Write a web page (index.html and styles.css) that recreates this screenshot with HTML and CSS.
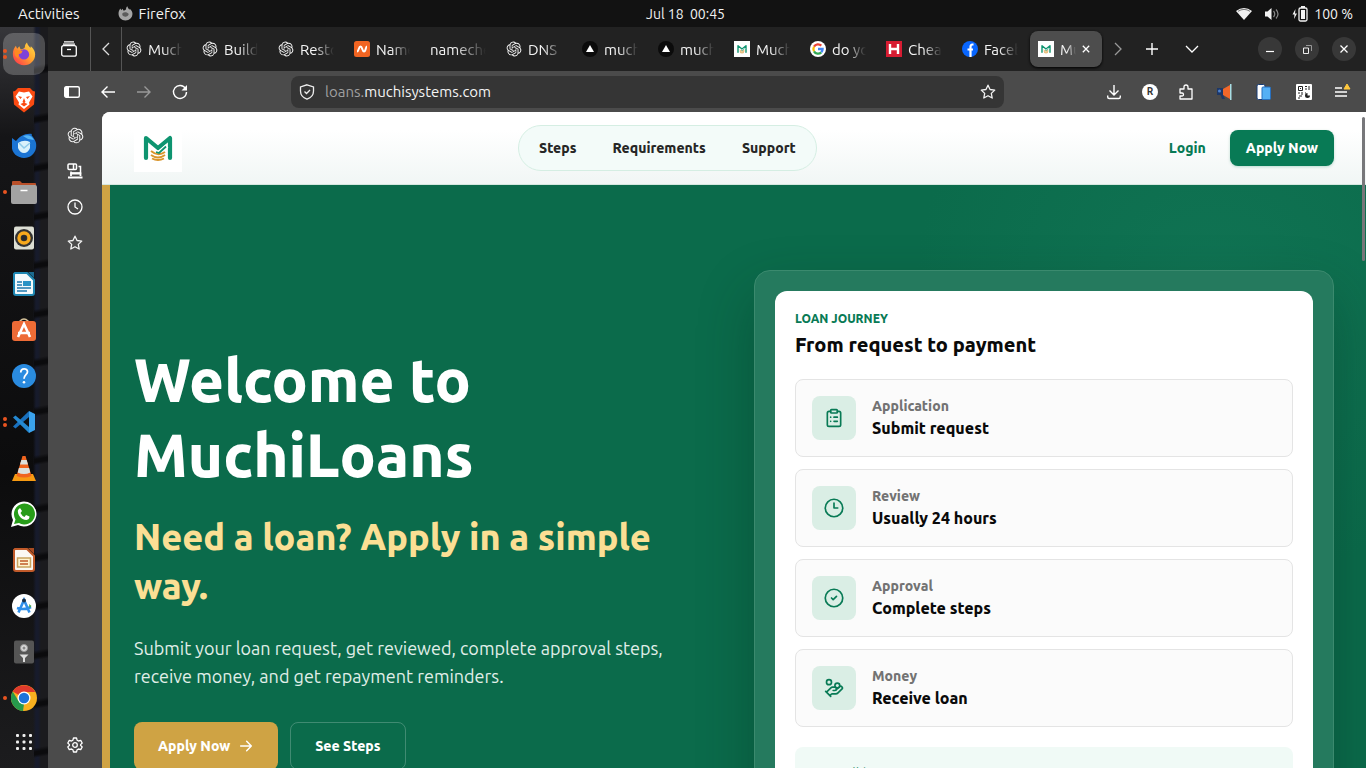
FILE: index.html
```html
<!DOCTYPE html>
<html lang="en">
<head>
<meta charset="utf-8">
<meta name="viewport" content="width=device-width, initial-scale=1">
<title>MuchiLoans</title>
<link rel="stylesheet" href="styles.css">
</head>
<body>
<svg class="sprite" aria-hidden="true">
  <symbol id="knot" viewBox="-1 -1 26 26"><path fill="currentColor" d="M22.2819 9.8211a5.9847 5.9847 0 0 0-.5157-4.9108 6.0462 6.0462 0 0 0-6.5098-2.9A6.0651 6.0651 0 0 0 4.9807 4.1818a5.9847 5.9847 0 0 0-3.9977 2.9 6.0462 6.0462 0 0 0 .7427 7.0966 5.98 5.98 0 0 0 .511 4.9107 6.051 6.051 0 0 0 6.5146 2.9001A5.9847 5.9847 0 0 0 13.2599 24a6.0557 6.0557 0 0 0 5.7718-4.2058 5.9894 5.9894 0 0 0 3.9977-2.9001 6.0557 6.0557 0 0 0-.7475-7.0729zm-9.022 12.6081a4.4755 4.4755 0 0 1-2.8764-1.0408l.1419-.0804 4.7783-2.7582a.7948.7948 0 0 0 .3927-.6813v-6.7369l2.02 1.1686a.071.071 0 0 1 .038.052v5.5826a4.504 4.504 0 0 1-4.4945 4.4944zm-9.6607-4.1254a4.4708 4.4708 0 0 1-.5346-3.0137l.142.0852 4.783 2.7582a.7712.7712 0 0 0 .7806 0l5.8428-3.3685v2.3324a.0804.0804 0 0 1-.0332.0615L9.74 19.9502a4.4992 4.4992 0 0 1-6.1408-1.6464zM2.3408 7.8956a4.485 4.485 0 0 1 2.3655-1.9728V11.6a.7664.7664 0 0 0 .3879.6765l5.8144 3.3543-2.0201 1.1685a.0757.0757 0 0 1-.071 0l-4.8303-2.7865A4.504 4.504 0 0 1 2.3408 7.872zm16.5963 3.8558L13.1038 8.364 15.1192 7.2a.0757.0757 0 0 1 .071 0l4.8303 2.7913a4.4944 4.4944 0 0 1-.6765 8.1042v-5.6772a.79.79 0 0 0-.407-.667zm2.0107-3.0231l-.142-.0852-4.7735-2.7818a.7759.7759 0 0 0-.7854 0L9.409 9.2297V6.8974a.0662.0662 0 0 1 .0284-.0615l4.8303-2.7866a4.4992 4.4992 0 0 1 6.6802 4.66zM8.3065 12.863l-2.02-1.1638a.0804.0804 0 0 1-.038-.0567V6.0742a4.4992 4.4992 0 0 1 7.3757-3.4537l-.142.0805L8.704 5.459a.7948.7948 0 0 0-.3927.6813zm1.0976-2.3654l2.602-1.4998 2.6069 1.4998v2.9994l-2.5974 1.4997-2.6067-1.4997Z"/></symbol>
  <symbol id="vercel" viewBox="0 0 16 16"><circle cx="8" cy="8" r="8" fill="#0b0b0b"/><path d="M8 4l4 7H4z" fill="#fff"/></symbol>
  <symbol id="muchi" viewBox="0 0 48 48">
    <path d="M12 34V14L24 24 36 14V34" fill="none" stroke="#0e9470" stroke-width="4.200" stroke-linejoin="round" stroke-linecap="round"/>
    <path d="M17 27l7 3.500L33 22" fill="none" stroke="#fff" stroke-width="4"/>
    <path d="M17 27q7 6 14 1M17 31q7 5 14 0M18 34.500q6 3 12 0" fill="none" stroke="#d9952c" stroke-width="1.900"/>
    <path d="M22 28l3 1L32 22.500" fill="none" stroke="#0e9470" stroke-width="1.800"/></symbol>
  <symbol id="star" viewBox="0 0 16 16"><path d="M8 1.200l2.050 4.300 4.700.6-3.450 3.250.9 4.650L8 11.700 3.800 14l.9-4.650L1.250 6.100l4.700-.6z" fill="none" stroke="currentColor" stroke-width="1.300" stroke-linejoin="round"/></symbol>
  <symbol id="flame" viewBox="0 0 28 28"><path d="M14 27C6.500 27 1 21.500 1 14 1 10 2.500 7 4.500 4.500L6 8l2.500-3 1.500 3.500c2 0 4-1 5-2.500 0-2.500 1-4 2.500-5.500.5 3 2.500 4.500 4 6.500l.5-2c3.500 3 5 6 5 9.500C27 21.500 21.500 27 14 27z"/></symbol>
</svg>
<div class="desktop">
  <header class="topbar">
    <div class="topbar-left">
      <button class="top-btn">Activities</button>
      <button class="top-btn app-name"><svg width="15" height="15" viewBox="0 0 28 28"><use href="#flame" fill="#a5a5a5"/><path d="M8 14c3-3 9-3 12 1-1 6-9 7-12 2z" fill="#5c5c5c"/></svg>Firefox</button>
    </div>
    <time class="clock">Jul 18&nbsp; 00:45</time>
    <div class="tray">
      <svg width="16" height="14" viewBox="0 0 16 14"><path d="M0 4Q8-2 16 4L8 13z" fill="#f2f2f2"/><path d="M2 4.300Q8 .5 14 4.300" fill="none" stroke="#777" stroke-width="1"/></svg>
      <svg class="tray-volume" width="16" height="14" viewBox="0 0 16 14"><path d="M1 4.500h2.500L7.500 1v12L3.500 9.500H1z" fill="#f2f2f2"/><path d="M9.500 4q2.500 3 0 6M12 2.500q4 4.500 0 9" fill="none" stroke="#888" stroke-width="1.200"/></svg>
      <svg width="16" height="16" viewBox="0 0 16 16"><path d="M3.500 3L.5 8.500h2L2 13l3-5.500H3z" fill="#f2f2f2"/><rect x="7" y="2" width="8" height="13" rx="1.500" fill="none" stroke="#f2f2f2" stroke-width="1.300"/><path d="M9 0h4v2H9zM9 4h4v9H9z" fill="#f2f2f2"/></svg>
      <span>100 %</span>
    </div>
  </header>

  <div class="workspace">
    <nav class="dock" aria-label="Dock">
      <button class="dock-item is-active two" aria-label="Firefox"><svg width="24" height="24" viewBox="0 0 28 28"><defs><linearGradient id="ff" x1="1" y1="0" x2="0" y2="1"><stop offset="0" stop-color="#ffe34d"/><stop offset=".45" stop-color="#ffa52e"/><stop offset="1" stop-color="#ff2850"/></linearGradient></defs><use href="#flame" fill="url(#ff)"/><circle cx="14" cy="14.500" r="6" fill="#7d42d8"/><path d="M3 8q4 3 9.500 2L11 13l-4 1.500q-1 3 1.500 5Q3 18 3 12z" fill="#ff8a20"/></svg></button>
      <button class="dock-item" aria-label="Brave"><svg width="24" height="26" viewBox="0 0 24 26"><path d="M6 1h12l3 3 2 .5-1 13-10 8-10-8-1-13L3 4z" fill="#fb4a12"/><path d="M7 4.500l5 1 5-1 3.500 5-3.500 6 .5 2L12 22l-5.500-4.500.5-2-3.500-6z" fill="#fff"/><path d="M6 9l4 1-1.500 2zM18 9l-4 1 1.500 2zM12 11l1.500 4-1.500 1-1.500-1zM8.500 17l3.500-1.500 3.500 1.500L12 19.500z" fill="#fb4a12"/></svg></button>
      <button class="dock-item" aria-label="Thunderbird"><svg width="26" height="26" viewBox="0 0 26 26"><path d="M1 5l4 3C9 3 14 0 21 1c-1 1 0 2 1 3 2 3 4 6 3 11-1 6-6 10-12 10S0 20 1 13z" fill="#1b74d4"/><path d="M12 3c5-2 9 0 11 4l-6-1z" fill="#55b5f5"/><path d="M7 10q6-4 12-1v6q-2 5-6 5t-6-5z" fill="#d9f1fb"/><path d="M8 10l5 5 6-5" fill="none" stroke="#8fcbea" stroke-width="1.500"/></svg></button>
      <button class="dock-item one" aria-label="Files"><svg width="26" height="24" viewBox="0 0 26 24"><path d="M1 2q0-1 1-1h7l2 2h13q1 0 1 1v8H1z" fill="#b9502a"/><rect y="5" width="26" height="19" rx="2" fill="#a3a3a3"/><path d="M9.500 10.500h7" stroke="#fff" stroke-width="1.500"/></svg></button>
      <button class="dock-item" aria-label="Rhythmbox"><svg width="22" height="24" viewBox="0 0 22 24"><rect x="1" y=".5" width="20" height="23" rx="2" fill="#dcded4"/><circle cx="11" cy="12" r="9" fill="#333"/><circle cx="11" cy="12" r="5" fill="none" stroke="#f8a91c" stroke-width="3.400"/><circle cx="11" cy="12" r="2.400" fill="#292929"/></svg></button>
      <button class="dock-item" aria-label="Writer"><svg width="22" height="24" viewBox="0 0 22 24"><path d="M2 1h12l7 7v13q0 2-2 2H3q-2 0-2-2V2z" fill="#f4fafd" stroke="#1f87b3" stroke-width="2"/><path d="M15 0h6v6z" fill="#1b6a91"/><path d="M4 10h5M4 13h5M4 16h14M4 19h10" stroke="#1f79ad" stroke-width="1.500"/><rect x="10" y="9" width="8" height="5" fill="#2993c6"/></svg></button>
      <button class="dock-item" aria-label="Software"><svg width="24" height="24" viewBox="0 0 24 24"><path d="M8 5V3q4-4 8 0v2" fill="none" stroke="#d4c199" stroke-width="1.500"/><rect y="3" width="24" height="20" rx="3" fill="#ee6b36"/><path d="M6 19l6-13 6 13M6 15h12" fill="none" stroke="#fff" stroke-width="2.600"/></svg></button>
      <button class="dock-item" aria-label="Help"><svg width="24" height="24" viewBox="0 0 24 24"><circle cx="12" cy="12" r="12" fill="#2a8be0"/><path d="M8.800 8.500c0-5 6.700-4.500 6.700-.8 0 3-3.500 3-3.500 7" fill="none" stroke="#fff" stroke-width="1.800"/><circle cx="12" cy="18.300" r="1.300" fill="#fff"/></svg></button>
      <button class="dock-item two" aria-label="Visual Studio Code"><svg width="24" height="24" viewBox="0 0 24 24"><path d="M17 1v6L3.500 18.500 1 16.500z" fill="#1970bd"/><path d="M17 23v-6L3.500 5.500 1 7.500z" fill="#2489d2"/><path d="M17 1l6 3v16l-6 3z" fill="#3aa2ef"/></svg></button>
      <button class="dock-item" aria-label="VLC"><svg width="24" height="26" viewBox="0 0 24 26"><path d="M3 19h18l3 7H0z" fill="#f79a12"/><path d="M10.500 1h3l6 20q-7.500 3-15 0z" fill="#f0641e"/><path d="M9.300 5h5.400l1.300 4.500H8zM6.900 13h10.200l1.200 4.500q-6.300 3-12.600 0z" fill="#dce0dc"/></svg></button>
      <button class="dock-item" aria-label="WhatsApp"><svg width="26" height="26" viewBox="0 0 26 26"><path d="M0 26l2-7A12.500 12.500 0 1 1 7 24z" fill="#fff"/><path d="M3 23l1.500-4.500A10.500 10.500 0 1 1 8 22z" fill="#279c19"/><path d="M9 7l2 3-1.500 2q1.500 3 4 4l1.500-2 3.500 1.500q0 3-3 3.500C10 19 6 13 7 9z" fill="#fff"/></svg></button>
      <button class="dock-item" aria-label="Impress"><svg width="22" height="24" viewBox="0 0 22 24"><path d="M2 1h12l7 7v13q0 2-2 2H3q-2 0-2-2V2z" fill="#fbf8f4" stroke="#c05a2a" stroke-width="2"/><path d="M15 0h6v6z" fill="#a84b22"/><rect x="4.500" y="10" width="13" height="9" fill="#fff4d0" stroke="#c9a35f" stroke-width="1.500"/><path d="M7 13h8M7 16h8" stroke="#c05a2a" stroke-width="1.600"/></svg></button>
      <button class="dock-item" aria-label="Android Studio"><svg width="24" height="24" viewBox="0 0 24 24"><circle cx="12" cy="12" r="12" fill="#fff"/><path d="M6.500 18.500L12 6l5.500 12.500M5 14q7 2.500 14-1" fill="none" stroke="#2f8fe9" stroke-width="2.600"/><circle cx="12" cy="6.500" r="2" fill="#1b3147"/><path d="M17 10l2.500 2-2 2z" fill="#49a849"/></svg></button>
      <button class="dock-item" aria-label="Disk utility"><svg width="20" height="24" viewBox="0 0 20 24"><rect y=".5" width="20" height="23" rx="2" fill="#555"/><circle cx="10" cy="8" r="3.500" fill="#ddd" stroke="#999"/><circle cx="10" cy="8" r="1.500" fill="#888"/><path d="M5.500 14.500h9L11 18v4H9v-4z" fill="#ddd"/></svg></button>
      <button class="dock-item one" aria-label="Chrome"><svg width="26" height="26" viewBox="0 0 26 26"><circle cx="13" cy="13" r="13" fill="#f8b01f"/><path d="M13 13L1.700 6.500A13 13 0 0 1 24.300 7H13z" fill="#df3a2c"/><path d="M1.700 6.500L7.500 16l5.500 3-1 7A13 13 0 0 1 1.700 6.500z" fill="#279a4c"/><circle cx="13" cy="13" r="6.500" fill="#fff"/><circle cx="13" cy="13" r="5.200" fill="#1c73d9"/></svg></button>
      <button class="dock-item" aria-label="Show applications"><svg width="18" height="18" viewBox="0 0 18 18" fill="#eee"><g id="dots"><rect x="1" y="1" width="3" height="3" rx="1"/><rect x="7.500" y="1" width="3" height="3" rx="1"/><rect x="14" y="1" width="3" height="3" rx="1"/></g><use href="#dots" y="6.500"/><use href="#dots" y="13"/></svg></button>
    </nav>

    <main class="browser">
      <div class="tabbar">
        <button class="tab-tool archive" aria-label="Recent tabs"><svg width="16" height="16" viewBox="0 0 16 16" fill="none" stroke="#fff" stroke-width="1.300"><path d="M3 .8h10M2 3.200h12"/><rect x=".7" y="4.700" width="14.600" height="10.500" rx="2"/><path d="M6 8.500h4"/></svg></button>
        <button class="tab-tool prev" aria-label="Scroll left"><svg width="8" height="14" viewBox="0 0 8 14"><path d="M7 1L1 7l6 6" fill="none" stroke="#ddd" stroke-width="1.300"/></svg></button>
        <div class="tabs">
          <button class="tab"><svg class="fav"><use href="#knot"/></svg><span>Much</span></button>
          <button class="tab"><svg class="fav"><use href="#knot"/></svg><span>Build</span></button>
          <button class="tab"><svg class="fav"><use href="#knot"/></svg><span>Resto</span></button>
          <button class="tab"><svg class="fav" viewBox="0 0 16 16"><rect width="16" height="16" rx="2.500" fill="#f26522"/><path d="M3 10.500c2 0 1.500-5 3.500-5s1.500 5 3.500 5 1.500-5 3-5" fill="none" stroke="#fff" stroke-width="2"/></svg><span>Name</span></button>
          <button class="tab"><span>nameche</span></button>
          <button class="tab"><svg class="fav"><use href="#knot"/></svg><span>DNS</span></button>
          <button class="tab"><svg class="fav"><use href="#vercel"/></svg><span>much</span></button>
          <button class="tab"><svg class="fav"><use href="#vercel"/></svg><span>much</span></button>
          <button class="tab"><svg class="fav white"><use href="#muchi"/></svg><span>Much</span></button>
          <button class="tab"><svg class="fav" viewBox="0 0 16 16"><circle cx="8" cy="8" r="8" fill="#fff"/><g fill="none" stroke-width="2.300"><path d="M11.300 4.700A4.700 4.700 0 0 0 4 5.700" stroke="#ea4335"/><path d="M4 5.700a4.700 4.700 0 0 0 0 4.600" stroke="#fbbc05"/><path d="M4 10.300a4.700 4.700 0 0 0 7.300 1" stroke="#34a853"/><path d="M11.300 11.300A4.500 4.500 0 0 0 12.600 8H8" stroke="#4285f4"/></g></svg><span>do yo</span></button>
          <button class="tab"><svg class="fav" viewBox="0 0 16 16"><path d="M0 0h16v16H0z" fill="#d71c32"/><path d="M4 3v10M12 3v10M4 8h8" stroke="#fff" stroke-width="2.400"/></svg><span>Chea</span></button>
          <button class="tab"><svg class="fav" viewBox="0 0 16 16"><circle cx="8" cy="8" r="8" fill="#0866ff"/><path d="M11.500 3.500H10.500Q8.500 3.500 8.500 6v10M5.500 8.500h5.500" fill="none" stroke="#fff" stroke-width="2.200"/></svg><span>Faceb</span></button>
          <button class="tab selected"><svg class="fav white"><use href="#muchi"/></svg><span>Mu</span><svg width="8" height="8" viewBox="0 0 10 10"><path d="M1 1l8 8M9 1L1 9" stroke="#fff" stroke-width="1.600"/></svg></button>
        </div>
        <button class="tab-tool next" aria-label="Scroll right"><svg width="8" height="14" viewBox="0 0 8 14"><path d="M1 1l6 6-6 6" fill="none" stroke="#999" stroke-width="1.300"/></svg></button>
        <button class="tab-tool wide" aria-label="New tab"><svg width="12" height="12" viewBox="0 0 12 12"><path d="M6 0v12M0 6h12" stroke="#fff" stroke-width="1.400"/></svg></button>
        <button class="tab-tool wide" aria-label="List all tabs"><svg width="14" height="8" viewBox="0 0 14 8"><path d="M1 1l6 6 6-6" fill="none" stroke="#fff" stroke-width="1.300"/></svg></button>
        <div class="window-controls">
          <button aria-label="Minimize"><svg width="8" height="8" viewBox="0 0 8 8"><path d="M0 6.500h8" stroke="#fff" stroke-width="1.200"/></svg></button>
          <button aria-label="Restore"><svg width="9" height="9" viewBox="0 0 9 9" fill="none" stroke="#eee"><path d="M.5 3h5v5.500h-5z"/><path d="M3 .5h5.500V6" stroke="#999"/></svg></button>
          <button aria-label="Close"><svg width="8" height="8" viewBox="0 0 8 8"><path d="M.5.5l7 7M7.500.5l-7 7" stroke="#fff" stroke-width="1.300"/></svg></button>
        </div>
      </div>

      <div class="toolbar">
        <button class="tool" aria-label="Sidebar"><svg width="16" height="12" viewBox="0 0 16 12"><rect x=".7" y=".7" width="14.600" height="10.600" rx="1.500" fill="none" stroke="#fff" stroke-width="1.400"/><path d="M1 1h4v10H1z" fill="#fff"/></svg></button>
        <button class="tool" aria-label="Back"><svg width="16" height="14" viewBox="0 0 16 14"><path d="M15 7H2M7.500 1.500L2 7l5.500 5.500" fill="none" stroke="#fff" stroke-width="1.400"/></svg></button>
        <button class="tool" aria-label="Forward"><svg width="16" height="14" viewBox="0 0 16 14"><path d="M1 7h13M8.500 1.500L14 7l-5.500 5.500" fill="none" stroke="#999" stroke-width="1.400"/></svg></button>
        <button class="tool" aria-label="Reload"><svg width="16" height="16" viewBox="0 0 16 16"><path d="M13.500 4.500A6.500 6.500 0 1 0 14.500 8" fill="none" stroke="#fff" stroke-width="1.400"/><path d="M15 1v5.500H9.500z" fill="#fff"/></svg></button>
        <div class="urlbar">
          <svg width="16" height="16" viewBox="0 0 16 16" fill="none" stroke="#eee" stroke-width="1.300"><path d="M8 .8L14.500 3v4c0 4-3 7-6.500 8.200C4.500 14 1.500 11 1.500 7V3z"/><path d="M5.500 7.500l2 2 3.500-3.500"/></svg>
          <a class="url" href="#top"><span>loans.</span>muchisystems.com</a>
          <svg width="16" height="16"><use href="#star"/></svg>
        </div>
        <button class="tool" aria-label="Downloads"><svg width="14" height="16" viewBox="0 0 14 16" fill="none" stroke="#fff" stroke-width="1.400"><path d="M7 1v9.500M2.500 6.500L7 11l4.500-4.500M.7 11.500v1.500q0 1.500 1.500 1.500h9.600q1.500 0 1.500-1.500v-1.500"/></svg></button>
        <button class="tool" aria-label="R extension"><span class="r-badge">R</span></button>
        <button class="tool" aria-label="Extensions"><svg width="16" height="16" viewBox="0 0 16 16"><path d="M2 5h4V3q0-2 2-2t2 2v2h4v10H2v-3h2q1.500 0 1.500-1.500T4 9H2z" fill="none" stroke="#fff" stroke-width="1.300" stroke-linejoin="round"/></svg></button>
        <button class="tool wide" aria-label="Megaphone"><svg width="16" height="16" viewBox="0 0 16 16"><path d="M7 5l7-4v14l-7-4z" fill="#f2672a"/><path d="M14 0h1.500v16H14z" fill="#a8dde4"/><path d="M1 4h6v7l2 4H6l-1.500-4H1z" fill="#1d3767"/><circle cx="3.500" cy="7" r="1.500" fill="#4d83d0"/></svg></button>
        <button class="tool wide" aria-label="Device"><svg width="16" height="16" viewBox="0 0 16 16"><rect x="1" y=".5" width="8" height="15" rx="1.500" fill="#fff" stroke="#173c78"/><rect x="6" y="3" width="8.500" height="12.500" rx="1" fill="#55b0f5" stroke="#2870bf"/></svg></button>
        <button class="tool wide" aria-label="QR code"><svg width="16" height="16" viewBox="0 0 16 16"><rect width="16" height="16" rx="1" fill="#fff"/><path d="M2.500 2.500h4v4h-4zM9 2.500h2M13 2v4M9 5h2M2 9h2M6 8v3M3 12h3M2 14h2M9 9h1" fill="none" stroke="#222"/><path d="M4 4h1v1H4z" fill="#222"/><path d="M11.500 9v2.500H14a2.500 2.500 0 1 1-2.500-2.500z" fill="#222"/></svg></button>
        <button class="tool" aria-label="Menu"><svg width="18" height="18" viewBox="0 0 18 18"><path d="M2 5h7M2 9h12M2 13h12" stroke="#fff" stroke-width="1.400"/><path d="M14 1l3 5h-6z" fill="#ffc83d" stroke="#ffc83d" stroke-linejoin="round"/></svg></button>
      </div>

      <div class="content">
        <aside class="sidebar">
          <button class="side-btn" aria-label="Assistant"><svg width="17" height="17"><use href="#knot"/></svg></button>
          <button class="side-btn" aria-label="Synced tabs"><svg width="16" height="16" viewBox="0 0 16 16" fill="none" stroke="#fff" stroke-width="1.500"><rect x="1" y="1" width="8.500" height="5.500" rx="1"/><path d="M6.500 1v5.500M11.500 3.500h2V10H4V8.500" /><path d="M4 13v-2.500h9.500V13M1 14.500h14.500" stroke-width="1.800"/></svg></button>
          <button class="side-btn" aria-label="History"><svg width="16" height="16" viewBox="0 0 16 16" fill="none" stroke="#fff" stroke-width="1.300"><circle cx="8" cy="8" r="7"/><path d="M8 3.500V8l3 2"/></svg></button>
          <button class="side-btn" aria-label="Bookmarks"><svg width="16" height="16"><use href="#star"/></svg></button>
          <button class="side-btn last" aria-label="Settings"><svg width="16" height="16" viewBox="0 0 16 16" fill="none" stroke="#fff" stroke-width="1.300" stroke-linejoin="round"><path d="M6.500 1h3l.6 2.200 1.400.8 2.200-.6 1.500 2.600L13.600 7.600v.8l1.600 1.600-1.500 2.600-2.200-.6-1.400.8-.6 2.200h-3l-.6-2.200-1.400-.8-2.200.6L.8 10l1.600-1.600v-.8L.8 6l1.500-2.600 2.200.6 1.400-.8z"/><circle cx="8" cy="8" r="2.300"/></svg></button>
        </aside>

        <div class="page" id="top">
          <div class="scroll-thumb"></div>
          <header class="site-header">
            <a class="logo" href="#top" aria-label="MuchiLoans home"><svg width="48" height="48"><use href="#muchi"/></svg></a>
            <nav class="pill-nav"><a href="#steps">Steps</a><a href="#requirements">Requirements</a><a href="#support">Support</a></nav>
            <div class="account"><a class="login" href="#login">Login</a><a class="apply" href="#apply">Apply Now</a></div>
          </header>
          <section class="hero">
            <div class="intro">
              <h1>Welcome to MuchiLoans</h1>
              <h2>Need a loan? Apply in a simple way.</h2>
              <p>Submit your loan request, get reviewed, complete approval steps, receive money, and get repayment reminders.</p>
              <div class="actions">
                <a class="btn gold" href="#apply">Apply Now<svg width="16" height="16" viewBox="0 0 24 24" fill="none" stroke="currentColor" stroke-width="2.200" stroke-linecap="round" stroke-linejoin="round"><path d="M4 12h16M13 5l7 7-7 7"/></svg></a>
                <a class="btn outline" href="#steps">See Steps</a>
              </div>
            </div>
            <div class="journey-frame">
              <div class="journey" id="steps">
                <p class="eyebrow">LOAN JOURNEY</p>
                <h3>From request to payment</h3>
                <ol class="steps">
                  <li><span class="step-icon"><svg viewBox="0 0 24 24"><rect x="8" y="2" width="8" height="4" rx="1"/><path d="M16 4h2a2 2 0 0 1 2 2v14a2 2 0 0 1-2 2H6a2 2 0 0 1-2-2V6a2 2 0 0 1 2-2h2M12 11h4M12 16h4M8 11h.01M8 16h.01"/></svg></span><div><span>Application</span><strong>Submit request</strong></div></li>
                  <li><span class="step-icon"><svg viewBox="0 0 24 24"><circle cx="12" cy="12" r="10.500"/><path d="M12 6v6h4.500"/></svg></span><div><span>Review</span><strong>Usually 24 hours</strong></div></li>
                  <li><span class="step-icon"><svg viewBox="0 0 24 24"><circle cx="12" cy="12" r="10.500"/><path d="M9 12l2 2 4-4"/></svg></span><div><span>Approval</span><strong>Complete steps</strong></div></li>
                  <li><span class="step-icon"><svg viewBox="0 0 24 24"><path d="M11 15h2a2 2 0 1 0 0-4h-3c-.6 0-1.100.2-1.400.6L3 17M7 21l1.600-1.400c.3-.4.8-.6 1.400-.6h4c1.100 0 2.100-.4 2.800-1.200l4.600-4.400a2 2 0 0 0-2.750-2.910l-4.200 3.900M2 16l6 6"/><circle cx="16" cy="9" r="2.900"/><circle cx="6" cy="5" r="3"/></svg></span><div><span>Money</span><strong>Receive loan</strong></div></li>
                </ol>
                <p class="note">You will be sent a message at every stage</p>
              </div>
            </div>
          </section>
        </div>
      </div>
    </main>
  </div>
</div>
</body>
</html>
```
FILE: styles.css
```css
* { box-sizing: border-box; }

body {
  margin: 0;
  font-family: Ubuntu, "Noto Sans", sans-serif;
  color: #0a0a0a;
  background: #111;
}

button {
  font: inherit;
  color: inherit;
  border: 0;
  padding: 0;
  background: none;
}

a { color: inherit; text-decoration: none; }
h1, h2, h3, p, ol { margin: 0; padding: 0; }
svg { display: block; flex: none; }
.sprite { position: absolute; width: 0; height: 0; }

.desktop {
  display: flex;
  flex-direction: column;
  height: 100vh;
  overflow: hidden;
}

/* System bar */
.topbar {
  display: grid;
  grid-template-columns: 1fr auto 1fr;
  align-items: center;
  flex: none;
  height: 27px;
  padding: 0 13px 0 18px;
  background: #121212;
  color: #f2f2f2;
  font-size: 15px;
}
.topbar-left, .app-name { display: flex; align-items: center; }
.topbar-left { gap: 38px; }
.app-name { gap: 6px; }
.clock { font-size: 14px; }
.tray { display: flex; align-items: center; justify-content: flex-end; gap: 6px; font-size: 14px; }
.tray-volume { margin: 0 6px; }

.workspace { display: flex; flex: 1; min-height: 0; }

/* Dock */
.dock {
  display: flex;
  flex-direction: column;
  flex: none;
  width: 48px;
  padding-top: 4px;
  background:
    repeating-linear-gradient(170deg, transparent 0 38px, #0b0b0d 42px 45px, transparent 48px) 34px 0 / 14px 100% no-repeat,
    linear-gradient(90deg, transparent 33px, #171b2c 36px 38px, #1b1b1e 41px),
    linear-gradient(#36363a, #151517 110px, #0c0c0d 60%, #1c1c1e);
}
.dock-item {
  position: relative;
  display: grid;
  place-items: center;
  flex: none;
  width: 48px;
  height: 46px;
}
.dock-item:last-child { height: 42px; }
.is-active::before {
  content: "";
  position: absolute;
  inset: 2px 3px;
  border-radius: 10px;
  background: #ffffff38;
}
.dock-item svg { position: relative; }
.one::after, .two::after {
  content: "";
  position: absolute;
  left: 3px;
  top: 21px;
  width: 4px;
  height: 4px;
  border-radius: 50%;
  background: #e95420;
}
.two::after { top: 18px; box-shadow: 0 6px #e95420; }

/* Browser chrome */
.browser {
  display: flex;
  flex-direction: column;
  flex: 1;
  min-width: 0;
  background: #4b4b4b;
  color: #f4f4f4;
}
.tabbar {
  display: flex;
  align-items: center;
  flex: none;
  height: 44px;
  padding-right: 10px;
  background: #222;
}
.tab-tool { display: grid; place-items: center; flex: none; height: 44px; }
.archive { width: 43px; border-right: 1px solid #555; }
.prev { width: 31px; border-right: 1px solid #555; }
.next { width: 28px; }
.tab-tool.wide { width: 40px; }
.tabs {
  display: flex;
  justify-content: flex-end;
  flex: 1;
  min-width: 0;
  overflow: hidden;
}
.tab {
  display: flex;
  align-items: center;
  gap: 6px;
  flex: none;
  width: 72px;
  height: 36px;
  margin: 4px 2px;
  padding: 0 8px;
  border-radius: 8px;
  font-size: 15px;
}
.tab span {
  flex: 1;
  min-width: 0;
  overflow: hidden;
  white-space: nowrap;
  text-align: left;
  mask-image: linear-gradient(90deg, #000 45%, transparent);
}
.tab.selected { padding-right: 12px; background: #4d4d4d; box-shadow: 0 1px 3px #000; }
.fav { width: 16px; height: 16px; }
.fav.white { background: #fff; }
.window-controls { display: flex; gap: 13px; margin-left: 46px; }
.window-controls button {
  display: grid;
  place-items: center;
  width: 24px;
  height: 24px;
  border-radius: 50%;
  background: #383838;
}

.toolbar {
  display: flex;
  align-items: center;
  flex: none;
  height: 41px;
  padding: 0 6px;
}
.tool { display: grid; place-items: center; flex: none; width: 36px; height: 32px; }
.tool.wide { width: 40px; }
.urlbar {
  display: flex;
  align-items: center;
  gap: 10px;
  flex: 1;
  height: 32px;
  margin: 0 92px 0 93px;
  padding: 0 8px;
  border-radius: 8px;
  background: #353535;
  font-size: 15px;
}
.url { flex: 1; }
.url span { color: #a0a0a0; }
.r-badge {
  display: grid;
  place-items: center;
  width: 16px;
  height: 16px;
  border-radius: 50%;
  background: #fff;
  color: #333;
  font-size: 10px;
  font-weight: 700;
}

.content { display: flex; flex: 1; min-height: 0; }
.sidebar {
  display: flex;
  flex-direction: column;
  flex: none;
  width: 54px;
  padding: 5px 0;
}
.side-btn { display: grid; place-items: center; height: 36px; }
.side-btn.last { margin-top: auto; }

/* Website */
.page {
  position: relative;
  flex: 1;
  min-width: 0;
  overflow: hidden;
  border-top-left-radius: 8px;
  background: #fff;
}
.scroll-thumb {
  position: absolute;
  z-index: 2;
  top: 5px;
  right: 1px;
  width: 3px;
  height: 144px;
  border-radius: 2px;
  background: #77777a;
}
.site-header {
  display: flex;
  align-items: center;
  justify-content: space-between;
  height: 73px;
  padding: 0 32px;
  border-bottom: 1px solid #d5e7df;
  background: linear-gradient(#fff 25%, #f1f6f5);
  font-size: 14px;
  font-weight: 800;
}
.logo { background: #fff; }
.pill-nav {
  display: flex;
  gap: 4px;
  padding: 4px;
  border: 1px solid #d5eee3;
  border-radius: 24px;
  background: #f3fbf9;
  color: #262626;
}
.pill-nav a { padding: 8px 16px; line-height: 20px; }
.account { display: flex; align-items: center; gap: 8px; }
.login { padding: 8px 16px; color: #087a55; }
.apply {
  padding: 8px 16px;
  border-radius: 8px;
  background: #087a55;
  color: #fff;
  line-height: 20px;
  box-shadow: 0 1px 3px #087a5540;
}

.hero {
  display: grid;
  grid-template-columns: 1fr 1fr;
  align-items: center;
  gap: 40px;
  padding: 85px 32px 85px 24px;
  border-left: 8px solid #cfa344;
  background: radial-gradient(circle at 88% 14%, #107353, #0b6b4b 300px);
  color: #fff;
}
.intro h1 { font-size: 60px; line-height: 75px; font-weight: 800; }
.intro h2 {
  margin-top: 20px;
  color: #fbdf94;
  font-size: 36px;
  line-height: 49px;
  font-weight: 800;
}
.intro p { margin-top: 24px; color: #e1efe9; font-size: 18px; line-height: 28px; }
.actions { display: flex; gap: 12px; margin-top: 32px; }
.btn {
  display: flex;
  align-items: center;
  gap: 8px;
  height: 48px;
  padding: 0 24px;
  border-radius: 8px;
  font-size: 14px;
  font-weight: 800;
}
.gold { background: #cfa344; }
.outline { border: 1px solid #ffffff38; }

.journey-frame {
  padding: 20px;
  border: 1px solid #3b8a6e;
  border-radius: 16px;
  background: #257a5e;
  box-shadow: 0 24px 56px #002a1c55;
}
.journey { padding: 20px; border-radius: 12px; background: #fff; color: #0a0a0a; }
.eyebrow { color: #087a55; font-size: 12px; line-height: 16px; font-weight: 800; }
.journey h3 { margin: 4px 0 20px; font-size: 20px; line-height: 28px; font-weight: 800; }
.steps { display: grid; gap: 12px; list-style: none; }
.steps li {
  display: flex;
  gap: 16px;
  padding: 16px;
  border: 1px solid #e4e4e4;
  border-radius: 8px;
  background: #fbfbfb;
}
.step-icon {
  display: grid;
  place-items: center;
  width: 44px;
  height: 44px;
  border-radius: 8px;
  background: #daeee5;
}
.step-icon svg {
  width: 20px;
  height: 20px;
  fill: none;
  stroke: #087a55;
  stroke-width: 2;
  stroke-linecap: round;
  stroke-linejoin: round;
}
.steps div { display: grid; }
.steps div span { color: #737373; font-size: 14px; line-height: 20px; font-weight: 800; }
.steps strong { font-size: 16px; line-height: 24px; font-weight: 800; }
.note {
  margin-top: 20px;
  padding: 16px;
  border-radius: 8px;
  background: #f0faf6;
  color: #087a55;
  font-size: 14px;
  line-height: 22px;
}
```
